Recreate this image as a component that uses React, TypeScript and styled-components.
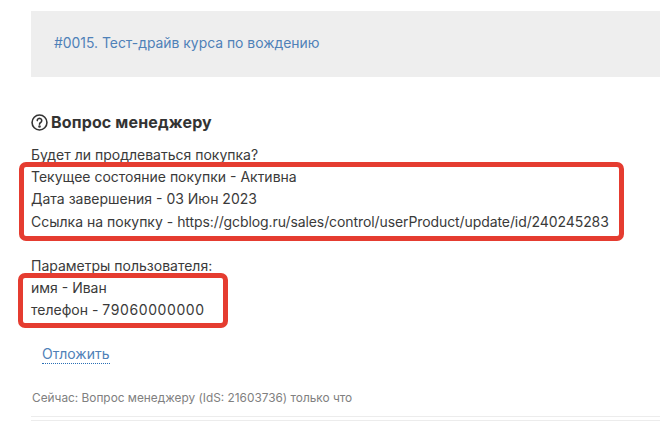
import styled, { createGlobalStyle } from "styled-components";

const Global = createGlobalStyle`
    html, body {
        margin: 0;
        padding: 0;
        background: #fff;
        overflow: hidden;
    }
`;

const Page = styled.div`
    width: 660px;
    height: 427px;
    padding: 11px 0 0 31px;
    box-sizing: border-box;
    font-family: "Inter", "Liberation Sans", sans-serif;
    color: #3a3a3a;
    overflow: hidden;
`;

const Banner = styled.div`
    height: 66px;
    background: #eeeeee;
    padding: 0 0 2px 23px;
    box-sizing: border-box;
    display: flex;
    align-items: center;
    font-size: 13.9px;
    color: #4f81b8;
`;

const Heading = styled.h3`
    margin: 34px 0 0;
    height: 22px;
    display: flex;
    align-items: center;
    gap: 3px;
    font-size: 16px;
    font-weight: 700;
    letter-spacing: 0.15px;
    color: #333;
`;

const Message = styled.div`
    position: relative;
    margin-top: 11px;
    font-size: 14px;
    line-height: 22.2px;
`;

const Line = styled.div`
    white-space: nowrap;
`;

const Group = styled.div`
    & + & {
        margin-top: 22px;
    }
`;

const Url = styled.span`
    letter-spacing: -0.09px;
`;

const Phone = styled.span`
    letter-spacing: 0.6px;
`;

const Highlight = styled.div<{ $left: number; $top: number; $width: number; $height: number }>`
    position: absolute;
    left: ${(p) => p.$left}px;
    top: ${(p) => p.$top}px;
    width: ${(p) => p.$width}px;
    height: ${(p) => p.$height}px;
    box-sizing: border-box;
    border: 5px solid #e53c30;
    border-radius: 7px;
`;

const Postpone = styled.a`
    display: inline-block;
    margin: 23px 0 0 11px;
    font-size: 14px;
    line-height: 19px;
    color: #4f81b8;
    border-bottom: 1px dotted #2a6fb5;
`;

const Status = styled.div`
    margin: 26px 0 0 1px;
    font-size: 11.85px;
    line-height: 16px;
    color: #808080;
`;

const Rule = styled.div`
    height: 1px;
    background: #ececec;
    margin-top: 3px;
`;

const RuleTop = styled(Rule)`
    margin-top: 10px;
`;

const HelpIcon = () => (
    <svg width="17" height="17" viewBox="0 0 16 16" fill="none" stroke="#333" strokeWidth="1.5" strokeLinecap="round">
        <circle cx="8" cy="8" r="7" />
        <path d="M5.9 6.2a2.1 2.1 0 1 1 3.2 1.8c-.7.4-1.1.8-1.1 1.6" />
        <circle cx="8" cy="11.8" r="0.5" fill="#333" />
    </svg>
);

export default function App() {
    return (
        <Page>
            <Global />
            <Banner>#0015. Тест-драйв курса по вождению</Banner>
            <Heading>
                <HelpIcon />
                Вопрос менеджеру
            </Heading>
            <Message>
                <Group>
                    <Line>Будет ли продлеваться покупка?</Line>
                    <Line>Текущее состояние покупки - Активна</Line>
                    <Line>Дата завершения - 03 Июн 2023</Line>
                    <Line>
                        Ссылка на покупку - <Url>https://gcblog.ru/sales/control/userProduct/update/id/240245283</Url>
                    </Line>
                </Group>
                <Group>
                    <Line>Параметры пользователя:</Line>
                    <Line>имя - Иван</Line>
                    <Line>
                        телефон - <Phone>79060000000</Phone>
                    </Line>
                </Group>
                <Highlight $left={-12} $top={18} $width={605} $height={79} />
                <Highlight $left={-13} $top={129} $width={210} $height={55} />
            </Message>
            <Postpone>Отложить</Postpone>
            <Status>Сейчас: Вопрос менеджеру (IdS: 21603736) только что</Status>
            <RuleTop />
            <Rule />
        </Page>
    );
}
